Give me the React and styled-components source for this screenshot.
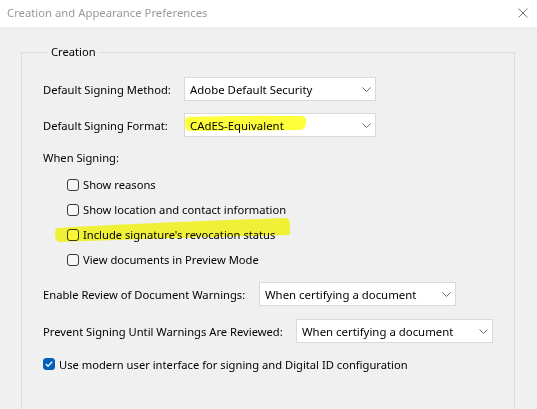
import React from 'react'
import styled, { createGlobalStyle } from 'styled-components';

const Global = createGlobalStyle`
  html, body { margin: 0; padding: 0; overflow: hidden; }
  body {
    background: #f0f0f0;
    font-family: "Noto Sans", "Open Sans", sans-serif;
    font-size: 11.2px;
    color: #000;
  }
`

const Window = styled.div`
  width: 537px;
  height: 409px;
  display: flex;
  flex-direction: column;
  background: #f0f0f0;
  overflow: hidden;
`

const TitleBar = styled.div`
  height: 27px;
  flex: none;
  background: #fff;
  display: flex;
  align-items: center;
  justify-content: space-between;
  padding: 0 9px 2px 7px;
  box-sizing: border-box;
  color: #999;
  font-size: 11.3px;
`

const Close = styled.svg`
  width: 10px;
  height: 10px;
`

const GroupBox = styled.fieldset`
  margin: 17px 0 0 21px;
  width: 494px;
  min-height: 400px;
  box-sizing: border-box;
  border: 1px solid #dcdcdc;
  padding: 17px 0 0 21px;
  display: flex;
  flex-direction: column;
`

const Legend = styled.legend`
  padding: 0 3px;
  margin-left: 5px;
  line-height: 16px;
`

const Row = styled.div`
  position: relative;
  display: flex;
  align-items: center;
  height: ${p => p.$h || 24}px;
  margin-top: ${p => p.$mt || 0}px;
  padding-left: ${p => p.$indent || 0}px;
`

const Label = styled.span`
  width: ${p => p.$w ? `${p.$w}px` : 'auto'};
  flex: none;
  white-space: nowrap;
  position: relative;
`

const Select = styled.div`
  width: ${p => p.$w}px;
  height: 24px;
  box-sizing: border-box;
  background: #fff;
  border: 1px solid #d9d9d9;
  display: flex;
  align-items: center;
  justify-content: space-between;
  padding: 0 4px 0 5px;
  flex: none;
  font-size: 11.4px;
`

const Chevron = styled.svg`
  width: 9px;
  height: 5px;
`

const Box = styled.span`
  width: 12px;
  height: 12px;
  box-sizing: border-box;
  border-radius: 3px;
  border: 1px solid ${p => p.$checked ? '#005fb8' : '#3a3a3a'};
  background: ${p => p.$checked ? '#005fb8' : '#f7f7f7'};
  margin-right: 4px;
  flex: none;
  display: flex;
  align-items: center;
  justify-content: center;
`

const Marker = styled.svg`
  position: absolute;
  left: ${p => p.$x}px;
  top: ${p => p.$y}px;
  mix-blend-mode: multiply;
  pointer-events: none;
`

const Dropdown = ({ value, w, children }) => (
  <Select $w={w}>
    <span style={{ position: 'relative' }}>{value}{children}</span>
    <Chevron viewBox="0 0 9 5">
      <path d="M0.5 0.5 L4.5 4.5 L8.5 0.5" fill="none" stroke="#6b6b6b" strokeWidth="1" />
    </Chevron>
  </Select>
)

const Tick = () => (
  <svg width="8" height="6" viewBox="0 0 8 6">
    <path d="M0.8 3 L3 5.2 L7.2 0.8" fill="none" stroke="#fff" strokeWidth="1.3" />
  </svg>
)

const Check = ({ checked, label, indent, mt, children }) => (
  <Row $h={checked ? 16 : 25} $indent={indent} $mt={mt}>
    {children}
    <Box $checked={checked}>{checked && <Tick />}</Box>
    <Label>{label}</Label>
  </Row>
)

export default function App() {
  return (
    <Window>
      <Global />
      <TitleBar>
        <span>Creation and Appearance Preferences</span>
        <Close viewBox="0 0 10 10">
          <path d="M0.5 0.5 L9.5 9.5 M9.5 0.5 L0.5 9.5" stroke="#777" strokeWidth="1" />
        </Close>
      </TitleBar>
      <GroupBox>
        <Legend>Creation</Legend>
        <Row>
          <Label $w={141}>Default Signing Method:</Label>
          <Dropdown w={192} value="Adobe Default Security" />
        </Row>
        <Row $mt={12}>
          <Label $w={141}>Default Signing Format:</Label>
          <Dropdown w={192} value="CAdES-Equivalent">
            <Marker $x={-6} $y={-3} width="124" height="17" viewBox="0 0 124 17">
              <path d="M3 2 Q60 0 118 1 Q123 2 122 8 Q121 15 116 15 L6 16 Q1 16 1 9 Q1 2 3 2 Z" fill="#ffff3a" />
            </Marker>
          </Dropdown>
        </Row>
        <Row $h={16} $mt={12}>
          <Label>When Signing:</Label>
        </Row>
        <Row $h={7} />
        <Check indent={24} label="Show reasons" />
        <Check indent={24} label="Show location and contact information" />
        <Check indent={24} label="Include signature's revocation status">
          <Marker $x={12} $y={-4} width="236" height="25" viewBox="0 0 236 25">
            <path d="M2 10 Q90 5 232 0 Q235 1 235 8 L235 17 Q150 19 3 24 Q0 22 0 17 Q0 11 2 10 Z" fill="#ffff3a" />
          </Marker>
        </Check>
        <Check indent={24} label="View documents in Preview Mode" />
        <Row $mt={10}>
          <Label $w={216}>Enable Review of Document Warnings:</Label>
          <Dropdown w={197} value="When certifying a document" />
        </Row>
        <Row $mt={13}>
          <Label $w={253}>Prevent Signing Until Warnings Are Reviewed:</Label>
          <Dropdown w={197} value="When certifying a document" />
        </Row>
        <Check checked mt={13} label="Use modern user interface for signing and Digital ID configuration" />
      </GroupBox>
    </Window>
  )
}
